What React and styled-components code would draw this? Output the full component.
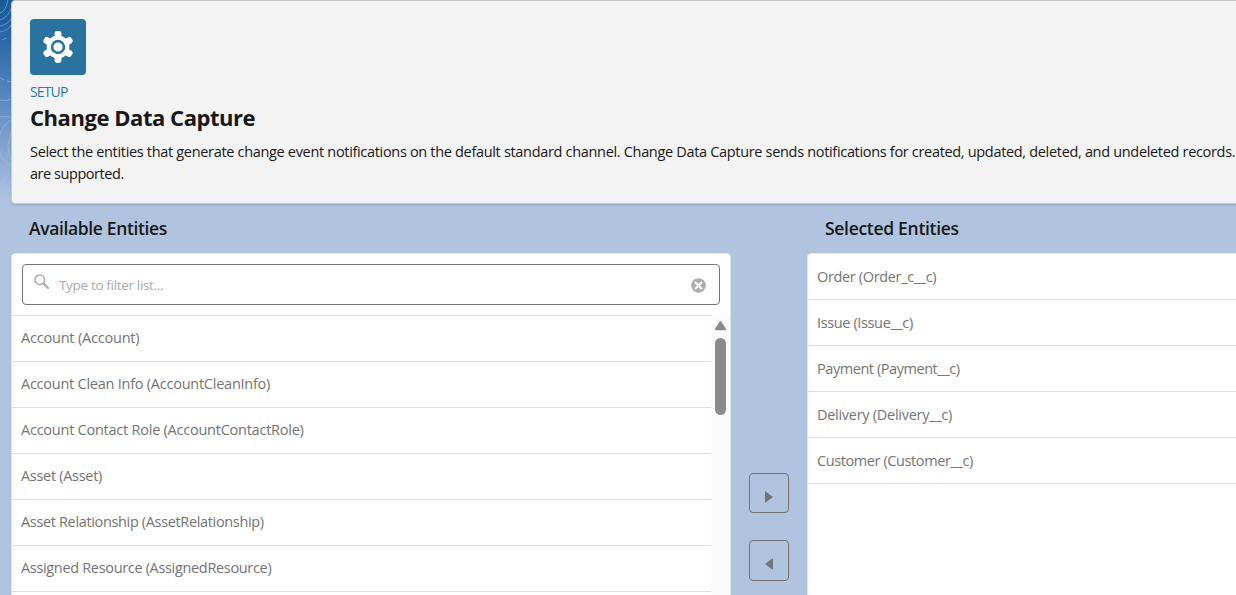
import React from "react";
import styled, { createGlobalStyle } from "styled-components";

const Global = createGlobalStyle`
  * { box-sizing: border-box; }
  html, body { margin: 0; height: 100%; overflow: hidden; }
  body { font-family: "Open Sans", "Noto Sans", sans-serif; color: #181818; background: #b0c4df; }
  h1, h2, p, ul { margin: 0; padding: 0; font-weight: inherit; }
`;

const Page = styled.div`
  position: relative;
  width: 1236px;
  height: 595px;
  overflow: hidden;
  background: #b0c4df;
`;

const Backdrop = styled.svg`
  position: absolute;
  left: 0;
  top: 0;
`;

const Header = styled.header`
  position: relative;
  margin-left: 11px;
  width: 1400px;
  height: 204px;
  padding: 18px;
  border: 1px solid #c9c9c9;
  border-radius: 4px;
  background: #f3f3f3;
  box-shadow: 0 2px 2px rgba(0, 0, 0, 0.1);
`;

const SetupIcon = styled.div`
  display: flex;
  align-items: center;
  justify-content: center;
  width: 56px;
  height: 56px;
  border-radius: 4px;
  background: #2a739e;
`;

const Eyebrow = styled.p`
  margin-top: 8px;
  font-size: 14px;
  line-height: 18px;
  letter-spacing: -0.86px;
  color: #2a78ac;
`;

const Title = styled.h1`
  margin-top: 3px;
  font-size: 22px;
  line-height: 26px;
  font-weight: 700;
  letter-spacing: -0.45px;
`;

const Description = styled.p`
  margin-top: 11px;
  font-size: 14.5px;
  line-height: 22px;
  white-space: nowrap;
`;

const Line = styled.span`
  display: block;
  letter-spacing: ${(p) => p.$track}px;
`;

const Columns = styled.main`
  display: flex;
  position: relative;
  margin-left: 11px;
  height: 391px;
`;

const Column = styled.section`
  flex: none;
  width: ${(p) => p.$width}px;
`;

const Heading = styled.h2`
  height: 49px;
  padding: 11px 18px 0;
  font-size: 17.5px;
  line-height: 26px;
  font-weight: 600;
  letter-spacing: ${(p) => p.$track}px;
`;

const Panel = styled.div`
  height: 380px;
  border: 1px solid #e2e2e4;
  border-radius: 4px 4px 0 0;
  background: #fff;
  overflow: hidden;
`;

const SearchBox = styled.div`
  display: flex;
  align-items: center;
  height: 41px;
  margin: 10px 10px 10px;
  padding: 0 13px 0 11px;
  border: 1px solid #747474;
  border-radius: 4px;

  svg { flex: none; }
  svg:first-child { margin-top: -6px; }
  svg:last-child { margin-top: 1px; }
`;

const Placeholder = styled.span`
  flex: 1;
  margin-left: 10px;
  padding-top: 1px;
  font-size: 13.5px;
  letter-spacing: -0.33px;
  color: #aaa;
`;

const ListArea = styled.div`
  display: flex;
`;

const List = styled.ul`
  flex: 1;
  list-style: none;
  border-top: ${(p) => (p.$topLine ? "1px solid #dfdfdf" : "none")};
`;

const Row = styled.li`
  height: 46px;
  padding-left: 9px;
  border-bottom: 1px solid #e0e0e0;
  font-size: 14.5px;
  line-height: ${(p) => p.$leading}px;
  white-space: nowrap;
  letter-spacing: ${(p) => p.$track}px;
  color: #747474;
`;

const ScrollTrack = styled.div`
  display: flex;
  flex-direction: column;
  align-items: center;
  width: 19px;
  height: 300px;
  padding-top: 5px;
  background: #fbfbfb;
`;

const ScrollThumb = styled.div`
  width: 11px;
  height: 77px;
  margin-top: 7px;
  border-radius: 5.5px;
  background: #8b8b8b;
`;

const Transfer = styled.div`
  display: flex;
  flex-direction: column;
  align-items: center;
  flex: none;
  gap: 27px;
  width: 76px;
  padding-top: 269px;
`;

const MoveButton = styled.button`
  display: flex;
  align-items: center;
  justify-content: center;
  width: 40px;
  height: ${(p) => p.$height}px;
  padding: 7px 0 0;
  border: 1px solid #747474;
  border-radius: 4px;
  background: transparent;
`;

const available = [
  ["Account (Account)", -0.2],
  ["Account Clean Info (AccountCleanInfo)", -0.245],
  ["Account Contact Role (AccountContactRole)", -0.24],
  ["Asset (Asset)", -0.3],
  ["Asset Relationship (AssetRelationship)", -0.345],
  ["Assigned Resource (AssignedResource)", -0.33],
];

const selected = [
  ["Order (Order_c__c)", -0.35],
  ["Issue (Issue__c)", -0.37],
  ["Payment (Payment__c)", -0.44],
  ["Delivery (Delivery__c)", -0.28],
  ["Customer (Customer__c)", -0.4],
];

const Contours = () => (
  <Backdrop width="24" height="253" viewBox="0 0 24 253">
    <defs>
      <linearGradient id="sky" x1="0" y1="0" x2="0" y2="1">
        <stop offset="0" stopColor="#195a9a" />
        <stop offset="0.16" stopColor="#2b68a8" />
        <stop offset="0.4" stopColor="#5d8ac0" />
        <stop offset="0.65" stopColor="#92aed5" />
        <stop offset="0.8" stopColor="#b0c4df" />
      </linearGradient>
    </defs>
    <rect width="24" height="253" fill="url(#sky)" />
    <g fill="none" stroke="#a9c6e6" strokeWidth="1" opacity="0.5">
      <path d="M0 13Q6 11 8 0M0 20Q9 17 12 6M0 26Q8 25 12 17M0 32Q8 31 12 24M2 40L7 38" />
      <path d="M0 78L4 80M7 81L12 82M0 100Q6 102 12 99" />
      <path d="M0 117Q6 115 12 118M0 135Q3 125 12 119M12 131Q4 146 12 162M0 153Q3 162 12 166M2 198V186Q3 176 12 175" />
    </g>
  </Backdrop>
);

const Gear = () => (
  <svg width="32" height="34" viewBox="-16 -17 32 34">
    <g fill="#fff">
      {[0, 60, 120].map((a) => (
        <rect key={a} x="-3.4" y="-16" width="6.8" height="32" rx="2.4" transform={`rotate(${a})`} />
      ))}
      <circle r="11.4" />
    </g>
    <circle r="5.9" fill="#fff" stroke="#2a739e" strokeWidth="2.6" />
  </svg>
);

export default function App() {
  return (
    <Page>
      <Global />
      <Contours />
      <Header>
        <SetupIcon><Gear /></SetupIcon>
        <Eyebrow>SETUP</Eyebrow>
        <Title>Change Data Capture</Title>
        <Description>
          <Line $track={-0.32}>Select the entities that generate change event notifications on the default standard channel. Change Data Capture sends notifications for created, updated, deleted, and undeleted records.</Line>
          <Line $track={-0.45}>are supported.</Line>
        </Description>
      </Header>
      <Columns>
        <Column $width={720}>
          <Heading $track={-0.36}>Available Entities</Heading>
          <Panel>
            <SearchBox>
              <svg width="15" height="15" viewBox="0 0 15 15" fill="none" stroke="#aaa">
                <circle cx="5.8" cy="5.8" r="4.8" strokeWidth="1.6" />
                <path d="M9.4 9.4L14 14" strokeWidth="2" strokeLinecap="round" />
              </svg>
              <Placeholder>Type to filter list...</Placeholder>
              <svg width="15" height="15" viewBox="0 0 15 15">
                <circle cx="7.5" cy="7.5" r="7.3" fill="#aeaeae" />
                <path d="M4.5 4.5L10.5 10.5M10.5 4.5L4.5 10.5" stroke="#fff" strokeWidth="1.9" strokeLinecap="round" />
              </svg>
            </SearchBox>
            <ListArea>
              <List $topLine>
                {available.map(([t, k]) => <Row key={t} $track={k} $leading={43}>{t}</Row>)}
              </List>
              <ScrollTrack>
                <svg width="13" height="11" viewBox="0 0 13 11">
                  <path d="M6.5 1.8L11.4 9.4H1.6Z" fill="#8b8b8b" stroke="#8b8b8b" strokeWidth="1.6" strokeLinejoin="round" />
                </svg>
                <ScrollThumb />
              </ScrollTrack>
            </ListArea>
          </Panel>
        </Column>
        <Transfer>
          <MoveButton $height={40} aria-label="Add">
            <svg width="8" height="12" viewBox="0 0 8 12"><path d="M0 0L8 6L0 12Z" fill="#747474" /></svg>
          </MoveButton>
          <MoveButton $height={41} aria-label="Remove">
            <svg width="8" height="12" viewBox="0 0 8 12"><path d="M8 0L0 6L8 12Z" fill="#747474" /></svg>
          </MoveButton>
        </Transfer>
        <Column $width={500}>
          <Heading $track={-0.3}>Selected Entities</Heading>
          <Panel>
            <List>
              {selected.map(([t, k]) => <Row key={t} $track={k} $leading={45}>{t}</Row>)}
            </List>
          </Panel>
        </Column>
      </Columns>
    </Page>
  );
}
